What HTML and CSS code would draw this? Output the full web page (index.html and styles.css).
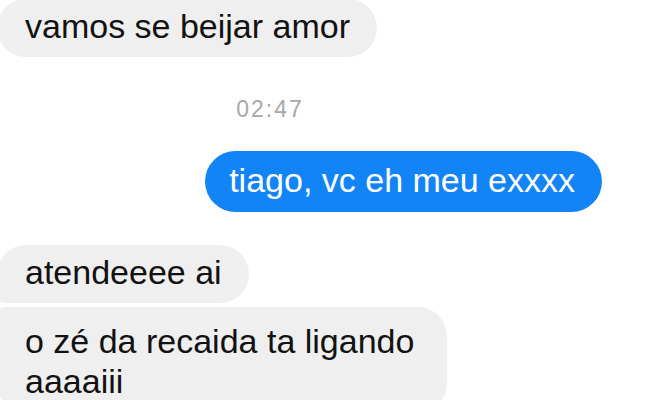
FILE: index.html
```html
<!DOCTYPE html>
<html lang="pt">
  <head>
    <meta charset="UTF-8">
    <meta name="viewport" content="width=device-width, initial-scale=1.0">
    <link rel="stylesheet" href="styles.css">
    <title>Conversa</title>
  </head>
  <body>
    <div class="chat">
      <div class="msg in first">vamos se beijar amor</div>
      <p class="time">02:47</p>
      <div class="msg out">tiago, vc eh meu exxxx</div>
      <div class="msg in group-top">atendeeee ai</div>
      <div class="msg in group-bottom">o zé da recaida ta ligando aaaaiii</div>
    </div>
  </body>
</html>
```

FILE: styles.css
```css
:root {
--grey: #efefef;
--blue: #1384f6;
--ink: #121212;
}
* {
margin: 0;
padding: 0;
box-sizing: border-box;
}
html,
body {
width: 100%;
height: 100%;
background: #fff;
overflow: hidden;
}
body {
font-family: "Liberation Sans", Arial, sans-serif;
}
.chat {
display: flex;
flex-direction: column;
align-items: flex-start;
}
.msg {
font-size: 34px;
line-height: 40px;
padding: 7px 27px 11px 28px;
border-radius: 29px;
max-width: 450px;
color: var(--ink);
}
.msg.in {
background-color: var(--grey);
margin-left: -3px;
}
.msg.first {
margin-top: -1px;
}
.msg.out {
align-self: flex-end;
margin-right: 58px;
margin-top: 28px;
padding: 9px 27px 12px 24px;
background-color: var(--blue);
color: #fff;
border-radius: 31px;
}
.msg.group-top {
margin-top: 33px;
border-bottom-left-radius: 8px;
}
.msg.group-bottom {
margin-top: 4px;
padding-top: 14px;
border-top-left-radius: 8px;
}
.time {
align-self: stretch;
margin-top: 38px;
padding-right: 120px;
text-align: center;
font-size: 23px;
line-height: 28px;
letter-spacing: 2px;
color: #a8a8a8;
}
```
